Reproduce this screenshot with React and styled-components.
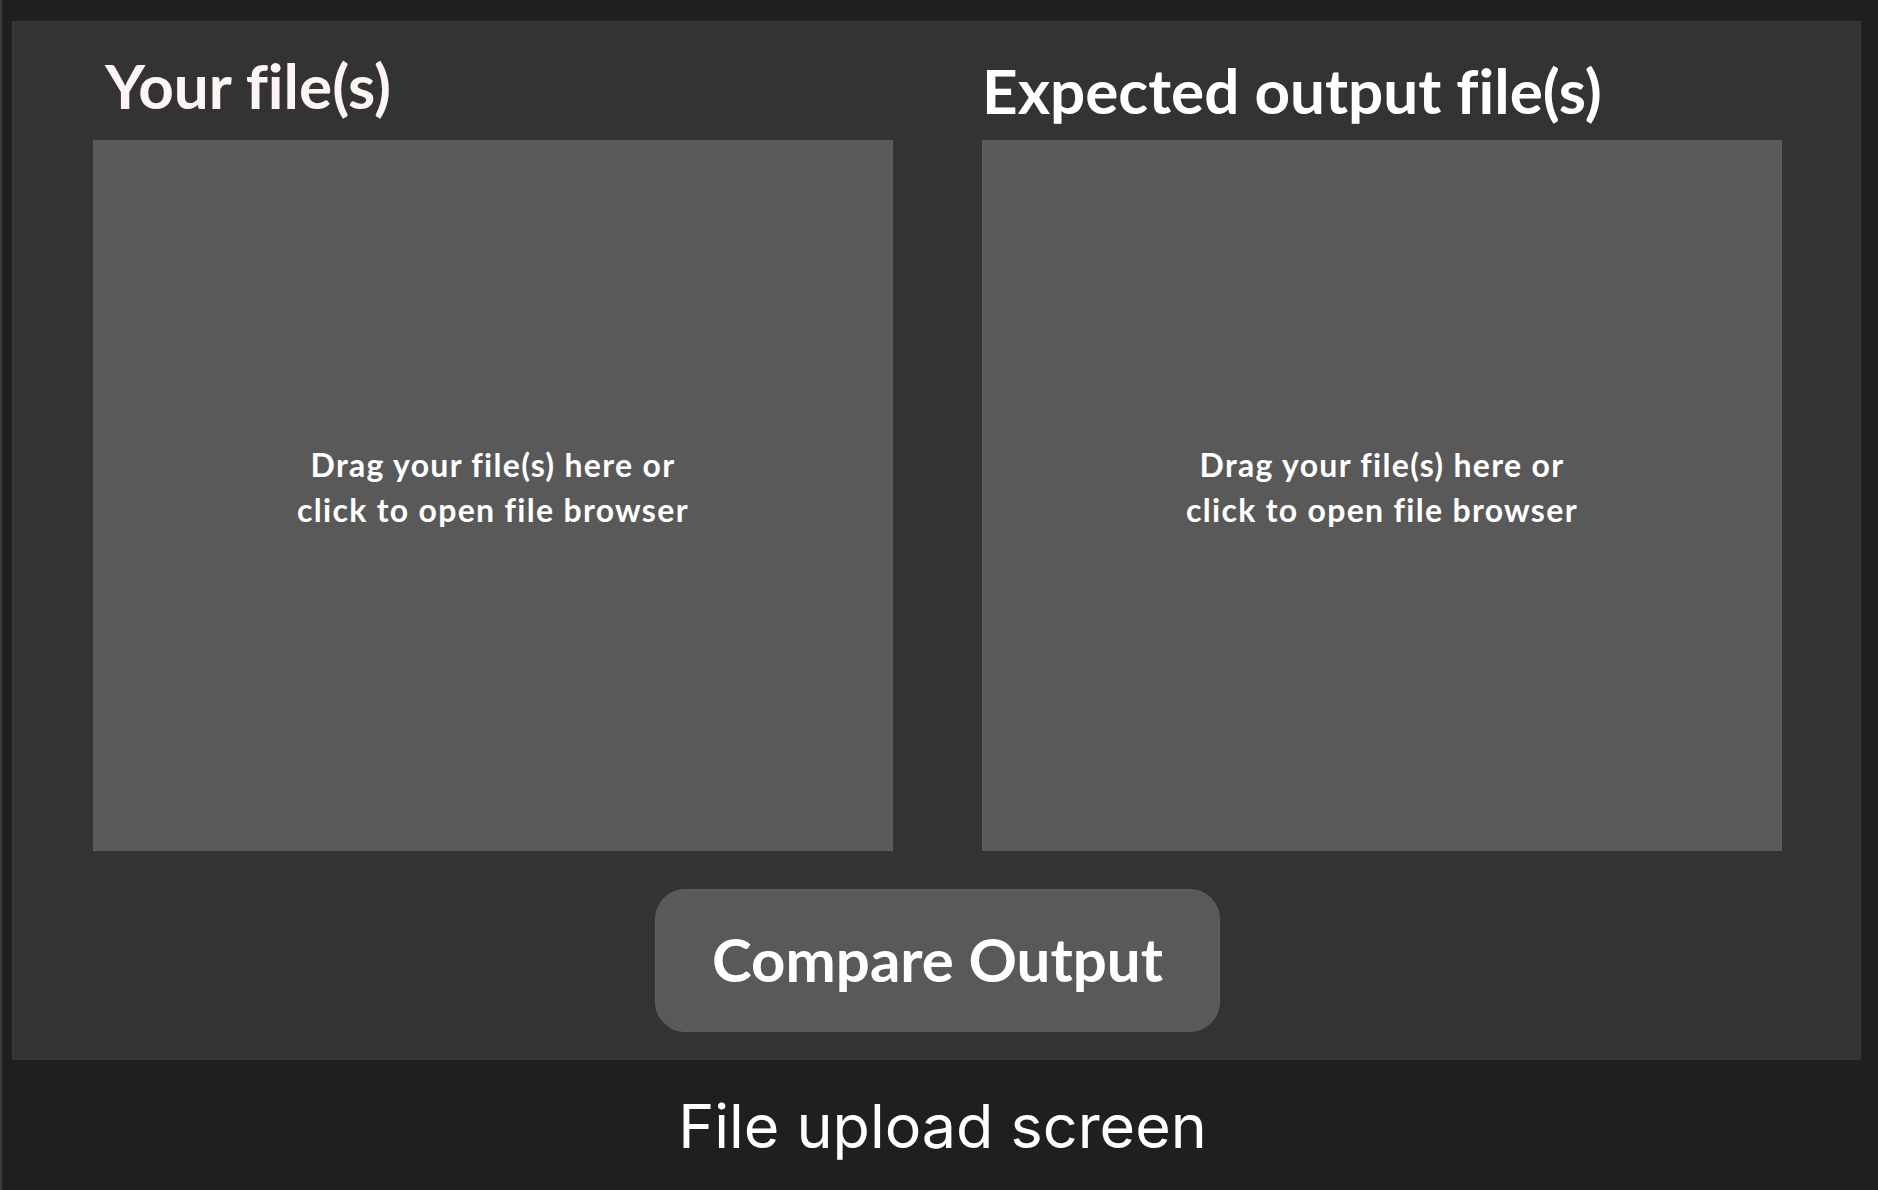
import React from "react";
import styled, { createGlobalStyle } from "styled-components";

const Global = createGlobalStyle`
  html, body { margin: 0; padding: 0; background: #1f1f1f; }
  body { width: 1878px; height: 1190px; overflow: hidden; }
`;

const Screen = styled.div`
  width: 1878px;
  height: 1190px;
  box-sizing: border-box;
  border-left: 2px solid #3b3b3b;
  background: #1f1f1f;
  padding: 21px 17px 0 10px;
  display: flex;
  flex-direction: column;
`;

const Panel = styled.main`
  width: 1849px;
  height: 1039px;
  box-sizing: border-box;
  background: #333333;
  border: 1px solid #383838;
  padding: 0 78px 0 80px;
  display: flex;
  flex-direction: column;
`;

const Columns = styled.div`
  display: flex;
  gap: 89px;
`;

const Column = styled.section`
  width: 800px;
  display: flex;
  flex-direction: column;
`;

const Title = styled.h2`
  margin: 0;
  height: 118px;
  box-sizing: border-box;
  padding: ${(p) => p.$top}px 0 0 ${(p) => p.$indent}px;
  font-family: Lato, "Liberation Sans", sans-serif;
  font-weight: 700;
  font-size: 62px;
  line-height: 1;
  font-variant-ligatures: none;
  color: ${(p) => p.$color};
  white-space: nowrap;
`;

const DropZone = styled.div`
  width: 800px;
  height: 711px;
  box-sizing: border-box;
  background: #595959;
  border: 1px solid #5e5e5e;
  display: flex;
  align-items: center;
  justify-content: center;
  text-align: center;
  font-family: Lato, "Liberation Sans", sans-serif;
  font-weight: 700;
  font-size: 32px;
  letter-spacing: 1.3px;
  font-variant-ligatures: none;
  line-height: 45px;
  color: #ffffff;
  padding-bottom: 18px;
  cursor: pointer;
`;

const ButtonRow = styled.div`
  display: flex;
  justify-content: center;
  padding-top: 38px;
`;

const CompareButton = styled.button`
  width: 565px;
  height: 143px;
  border: 1px solid #5e5e5e;
  border-radius: 30px;
  background: #595959;
  color: #ffffff;
  font-family: Lato, "Liberation Sans", sans-serif;
  font-weight: 700;
  font-size: 60px;
  padding: 0 0 4px 0;
  cursor: pointer;
`;

const Caption = styled.div`
  padding: 36px 0 0 12px;
  text-align: center;
  font-family: Inter, "Liberation Sans", sans-serif;
  font-weight: 400;
  font-size: 61px;
  line-height: 1;
  color: #ffffff;
`;

export default function App() {
  return (
    <>
      <Global />
      <Screen>
        <Panel>
          <Columns>
            <Column>
              <Title $top={32} $indent={12} $color="#fcf5f3">Your file(s)</Title>
              <DropZone>
                <div>
                  Drag your file(s) here or
                  <br />
                  click to open file browser
                </div>
              </DropZone>
            </Column>
            <Column>
              <Title $top={37} $indent={0} $color="#ffffff">Expected output file(s)</Title>
              <DropZone>
                <div>
                  Drag your file(s) here or
                  <br />
                  click to open file browser
                </div>
              </DropZone>
            </Column>
          </Columns>
          <ButtonRow>
            <CompareButton>Compare Output</CompareButton>
          </ButtonRow>
        </Panel>
        <Caption>File upload screen</Caption>
      </Screen>
    </>
  );
}
